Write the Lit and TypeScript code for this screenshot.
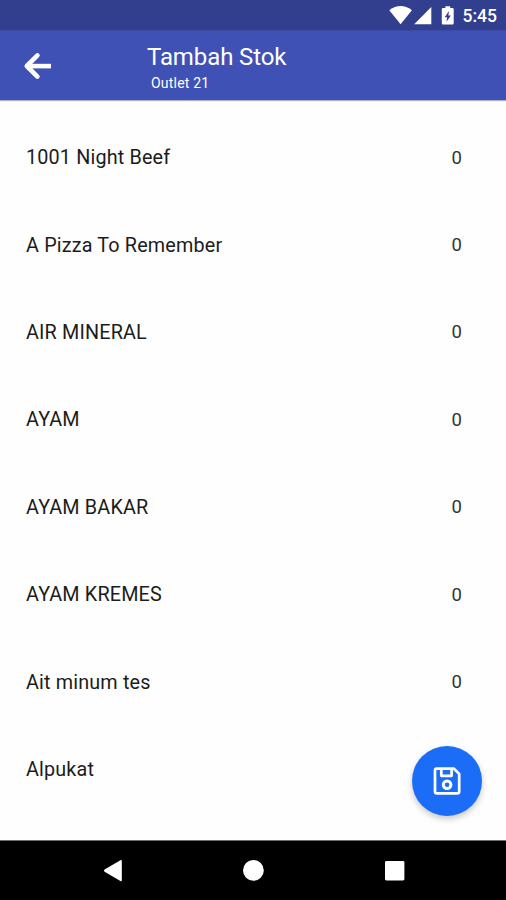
import { LitElement, html, css } from "lit";
import { customElement, property } from "lit/decorators.js";

interface StockItem {
  name: string;
  qty?: number;
}

@customElement("status-bar")
class StatusBar extends LitElement {
  static styles = css`
    :host {
      display: flex;
      align-items: center;
      justify-content: space-between;
      height: 30px;
      flex: none;
      box-sizing: border-box;
      padding: 0 9px 0 388px;
      background: #323f8f;
      color: #fff;
    }
    svg {
      display: block;
      flex: none;
      width: 70px;
      height: 30px;
      fill: #fff;
    }
    .time {
      font-size: 17.5px;
      font-weight: 500;
      line-height: 30px;
      padding-top: 2px;
    }
  `;
  render() {
    return html`
      <svg viewBox="388 0 70 30">
        <path d="M389.3 10.2Q400.5 1.8 411.9 10.2L400.6 24.2Z" />
        <path d="M431.3 7V24.2H414.2Z" />
        <path
          fill-rule="evenodd"
          d="M445.4 6.2h4.8v1.9h2.3q1.2 0 1.2 1.2v14q0 1.2-1.2 1.2h-9.5q-1.2 0-1.2-1.2v-14q0-1.2 1.2-1.2h2.4zM449 11l-4.3 6.2h2.4l-.6 4.6 4.4-6.4h-2.5z"
        />
      </svg>
      <span class="time">5:45</span>
    `;
  }
}

@customElement("app-header")
class AppHeader extends LitElement {
  @property() heading = "";
  @property() outlet = "";
  static styles = css`
    :host {
      display: flex;
      height: 70px;
      flex: none;
      box-sizing: border-box;
      border-top: 1px solid #3b4aa8;
      background: #4051b5;
      color: #fff;
      box-shadow: 0 1px 1px rgba(60, 60, 90, 0.4);
      z-index: 1;
    }
    .back {
      width: 147px;
      height: 69px;
      display: block;
    }
    .titles {
      display: flex;
      flex-direction: column;
      padding-top: 11px;
    }
    .heading {
      font-size: 24px;
      line-height: 30px;
      letter-spacing: -0.1px;
      white-space: nowrap;
    }
    .outlet {
      font-size: 14px;
      line-height: 18px;
      padding: 2px 0 0 4px;
      letter-spacing: 0.2px;
    }
  `;
  render() {
    return html`
      <svg class="back" viewBox="0 31 147 69" fill="none" stroke="#fff" stroke-width="4.6">
        <path stroke-linecap="round" stroke-linejoin="round" d="M37.4 55.4L26.8 66l10.6 10.6" />
        <path d="M27 66.1H51" />
      </svg>
      <div class="titles">
        <span class="heading">${this.heading}</span>
        <span class="outlet">${this.outlet}</span>
      </div>
    `;
  }
}

@customElement("nav-bar")
class NavBar extends LitElement {
  static styles = css`
    :host {
      display: block;
      height: 60px;
      flex: none;
      box-sizing: border-box;
      border-top: 1px solid #6b6f6b;
      background: #000;
      z-index: 1;
    }
    svg {
      display: block;
      width: 100%;
      height: 59px;
      fill: #fff;
    }
  `;
  render() {
    return html`
      <svg viewBox="0 841 506 59">
        <path d="M104.6 869.6L120.4 860.3Q121.8 859.7 121.8 861V880.3Q121.8 881.6 120.4 881L104.6 871.7Q103.2 870.6 104.6 869.6Z" />
        <circle cx="253.4" cy="870.4" r="10.4" />
        <rect x="385" y="861" width="19.4" height="19.4" rx="1.4" />
      </svg>
    `;
  }
}

@customElement("app-root")
class AppRoot extends LitElement {
  private items: StockItem[] = [
    { name: "1001 Night Beef", qty: 0 },
    { name: "A Pizza To Remember", qty: 0 },
    { name: "AIR MINERAL", qty: 0 },
    { name: "AYAM", qty: 0 },
    { name: "AYAM BAKAR", qty: 0 },
    { name: "AYAM KREMES", qty: 0 },
    { name: "Ait minum tes", qty: 0 },
    { name: "Alpukat" },
  ];
  static styles = css`
    :host {
      display: flex;
      flex-direction: column;
      position: relative;
      height: 900px;
      overflow: hidden;
      background: #fefefe;
      font-family: Roboto, sans-serif;
    }
    .list {
      flex: 1;
      min-height: 0;
      overflow: hidden;
      padding-top: 14px;
    }
    .row {
      display: flex;
      align-items: center;
      justify-content: space-between;
      height: 87.4px;
      padding: 0 44px 0 26px;
      font-size: 19.8px;
      letter-spacing: 0.16px;
      color: #1c1c1c;
    }
    .qty {
      font-size: 18.5px;
      letter-spacing: 0;
      color: #333;
    }
    .save {
      position: absolute;
      left: 412px;
      top: 746px;
      width: 70px;
      height: 70px;
      padding: 0;
      border: 0;
      border-radius: 50%;
      background: #1b6df7;
      box-shadow: 0 3px 6px rgba(0, 0, 0, 0.22);
    }
    .save svg {
      display: block;
      width: 70px;
      height: 70px;
    }
  `;
  render() {
    return html`
      <status-bar></status-bar>
      <app-header heading="Tambah Stok" outlet="Outlet 21"></app-header>
      <div class="list">
        ${this.items.map(
          (i) => html`<div class="row"><span>${i.name}</span><span class="qty">${i.qty ?? ""}</span></div>`
        )}
      </div>
      <nav-bar></nav-bar>
      <button class="save" aria-label="Simpan">
        <svg viewBox="412 746 70 70" fill="none" stroke="#fff" stroke-width="2.7" stroke-linejoin="round">
          <path d="M436.6 768.7H454L459.2 773.9V791.5Q459.2 793.4 457.3 793.4H436.8Q435 793.4 435 791.5V770.6Q435 768.7 436.6 768.7Z" />
          <path d="M441.3 768.9V775.8H451.6V768.9" />
          <circle cx="447.1" cy="784.7" r="3.8" stroke-width="3" />
        </svg>
      </button>
    `;
  }
}
